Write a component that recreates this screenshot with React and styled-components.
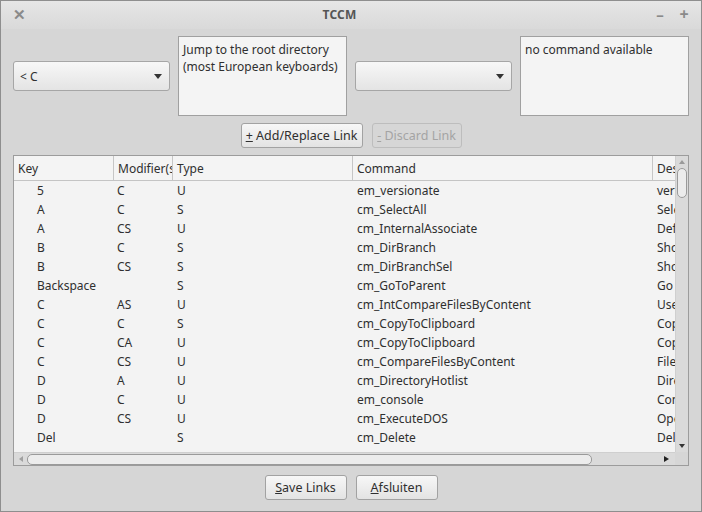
import React from "react";
import styled, { createGlobalStyle } from "styled-components";

const Global = createGlobalStyle`
  html, body { margin: 0; padding: 0; background: #d6d6d6; }
  body { font-family: "Noto Sans", "Open Sans", sans-serif; font-size: 12px; color: #2f2f2f; }
  * { box-sizing: border-box; }
`;

const Window = styled.div`
  width: 702px;
  height: 512px;
  border: 1px solid #8e8e8e;
  background: #d6d6d6;
  display: flex;
  flex-direction: column;
  overflow: hidden;
`;

const TitleBar = styled.div`
  height: 28px;
  flex: none;
  display: flex;
  align-items: center;
  padding: 0 10px 2px 11px;
  background: linear-gradient(#e6e6e6, #d9d9d9);
`;

const Title = styled.div`
  flex: 1;
  text-align: center;
  font-weight: bold;
  font-size: 12px;
  color: #555;
  letter-spacing: 0.2px;
`;

const TitleBtn = styled.span`
  width: 14px;
  display: inline-flex;
  justify-content: center;
  color: #8a8a8a;
  font-weight: bold;
  font-size: ${(p) => p.$size || 14}px;
  margin-left: ${(p) => p.$ml || 0}px;
`;

const Content = styled.div`
  flex: 1;
  display: flex;
  flex-direction: column;
  padding: 7px 12px 11px 12px;
`;

const TopRow = styled.div`
  display: flex;
  align-items: center;
  gap: 8px;
`;

const Combo = styled.div`
  width: 157px;
  height: 30px;
  border: 1px solid #a6a6a6;
  border-radius: 3px;
  background: linear-gradient(#f7f7f7, #e4e4e4);
  display: flex;
  align-items: center;
  padding: 0 7px 0 6px;
`;

const ComboText = styled.span`
  flex: 1;
`;

const Caret = styled.span`
  width: 0;
  height: 0;
  border-left: 4px solid transparent;
  border-right: 4px solid transparent;
  border-top: 5px solid #333;
`;

const Memo = styled.div`
  width: 169px;
  height: 80px;
  border: 1px solid #a0a0a0;
  background: #f4f4f4;
  padding: 4px 4px;
  line-height: 17px;
`;

const ButtonRow = styled.div`
  display: flex;
  justify-content: center;
  gap: 9px;
  margin-top: ${(p) => p.$mt}px;
`;

const Button = styled.div`
  height: 25px;
  width: ${(p) => p.$w}px;
  border: 1px solid ${(p) => (p.$disabled ? "#bdbdbd" : "#a2a2a2")};
  border-radius: 3px;
  background: ${(p) => (p.$disabled ? "#d6d6d6" : "linear-gradient(#f7f7f7, #e3e3e3)")};
  color: ${(p) => (p.$disabled ? "#a4a4a4" : "#2f2f2f")};
  display: flex;
  align-items: center;
  justify-content: center;
  font-size: 12.5px;
`;

const U = styled.span`
  text-decoration: underline;
`;

const Grid = styled.div`
  margin-top: 7px;
  height: 311px;
  border: 1px solid #9c9c9c;
  background: #f3f3f3;
  display: flex;
  flex-direction: column;
`;

const GridMain = styled.div`
  flex: 1;
  display: flex;
  min-height: 0;
`;

const Viewport = styled.div`
  flex: 1;
  overflow: hidden;
  background: #f3f3f3;
`;

const HeaderRow = styled.div`
  display: flex;
  height: 25px;
  border-bottom: 1px solid #c4c4c4;
  background: #f4f4f4;
`;

const HeadCell = styled.div`
  flex: none;
  width: ${(p) => p.$w}px;
  padding-left: 4px;
  display: flex;
  align-items: center;
  border-right: ${(p) => (p.$last ? "none" : "1px solid #c6c6c6")};
  overflow: hidden;
  white-space: nowrap;
`;

const Row = styled.div`
  display: flex;
  height: 19px;
  align-items: center;
`;

const Cell = styled.div`
  flex: none;
  width: ${(p) => p.$w}px;
  padding-left: ${(p) => p.$pl}px;
  overflow: hidden;
  white-space: nowrap;
`;

const VScroll = styled.div`
  width: 13px;
  flex: none;
  background: #dadada;
  border-left: 1px solid #cfcfcf;
  display: flex;
  flex-direction: column;
  align-items: center;
`;

const HScroll = styled.div`
  flex: 1;
  height: 13px;
  background: #dadada;
  border-top: 1px solid #cfcfcf;
  display: flex;
  align-items: center;
  padding: 0 6px 0 5px;
`;

const HRow = styled.div`
  display: flex;
  flex: none;
`;

const Corner = styled.div`
  width: 13px;
  height: 13px;
  background: #d6d6d6;
`;

const ArrowUp = styled.span`
  width: 0; height: 0;
  border-left: 3px solid transparent;
  border-right: 3px solid transparent;
  border-bottom: 4px solid ${(p) => p.$c};
`;
const ArrowDown = styled.span`
  width: 0; height: 0;
  border-left: 3px solid transparent;
  border-right: 3px solid transparent;
  border-top: 4px solid ${(p) => p.$c};
`;
const ArrowLeft = styled.span`
  width: 0; height: 0;
  border-top: 3px solid transparent;
  border-bottom: 3px solid transparent;
  border-right: 4px solid ${(p) => p.$c};
`;
const ArrowRight = styled.span`
  width: 0; height: 0;
  border-top: 3px solid transparent;
  border-bottom: 3px solid transparent;
  border-left: 5px solid ${(p) => p.$c};
`;

const VThumb = styled.div`
  width: 10px;
  height: 30px;
  border: 1px solid #9a9a9a;
  border-radius: 5px;
  background: #ececec;
  margin-top: 4px;
`;

const HThumb = styled.div`
  width: 565px;
  height: 11px;
  border: 1px solid #9a9a9a;
  border-radius: 5px;
  background: #ececec;
  margin-left: 4px;
`;

const Spacer = styled.div`
  flex: 1;
`;

const Gap = styled.div`
  height: ${(p) => p.$h}px;
  flex: none;
`;

const cols = [
  { w: 100, pl: 23 },
  { w: 59, pl: 3 },
  { w: 180, pl: 4 },
  { w: 300, pl: 4 },
  { w: 300, pl: 4 },
];

const heads = ["Key", "Modifier(s)", "Type", "Command", "Description"];

const rows = [
  ["5", "C", "U", "em_versionate", "versionate"],
  ["A", "C", "S", "cm_SelectAll", "Select all"],
  ["A", "CS", "U", "cm_InternalAssociate", "Define associations"],
  ["B", "C", "S", "cm_DirBranch", "Show all files"],
  ["B", "CS", "S", "cm_DirBranchSel", "Show selected"],
  ["Backspace", "", "S", "cm_GoToParent", "Go to parent"],
  ["C", "AS", "U", "cm_IntCompareFilesByContent", "Use internal compare"],
  ["C", "C", "S", "cm_CopyToClipboard", "Copy to clipboard"],
  ["C", "CA", "U", "cm_CopyToClipboard", "Copy to clipboard"],
  ["C", "CS", "U", "cm_CompareFilesByContent", "File compare"],
  ["D", "A", "U", "cm_DirectoryHotlist", "Directory hotlist"],
  ["D", "C", "U", "em_console", "Console"],
  ["D", "CS", "U", "cm_ExecuteDOS", "Open command prompt"],
  ["Del", "", "S", "cm_Delete", "Delete"],
  ["Down", "", "S", "cm_Down", "Down"],
];

export default function App() {
  return (
    <>
      <Global />
      <Window>
        <TitleBar>
          <TitleBtn $size={15}>✕</TitleBtn>
          <Title>TCCM</Title>
          <TitleBtn $size={15}>–</TitleBtn>
          <TitleBtn $size={16} $ml={10}>+</TitleBtn>
        </TitleBar>
        <Content>
          <TopRow>
            <Combo>
              <ComboText>&lt; C</ComboText>
              <Caret />
            </Combo>
            <Memo>
              Jump to the root directory
              <br />
              (most European keyboards)
            </Memo>
            <Combo>
              <ComboText />
              <Caret />
            </Combo>
            <Memo>no command available</Memo>
          </TopRow>
          <ButtonRow $mt={7}>
            <Button $w={122}>
              <U>+</U>&nbsp;Add/Replace Link
            </Button>
            <Button $w={90} $disabled>
              <U>-</U>&nbsp;Discard Link
            </Button>
          </ButtonRow>
          <Grid>
            <GridMain>
              <Viewport>
                <HeaderRow>
                  {heads.map((h, i) => (
                    <HeadCell key={h} $w={cols[i].w} $last={i === 4}>
                      {h}
                    </HeadCell>
                  ))}
                </HeaderRow>
                {rows.map((r, ri) => (
                  <Row key={ri}>
                    {r.map((c, ci) => (
                      <Cell key={ci} $w={cols[ci].w} $pl={cols[ci].pl}>
                        {c}
                      </Cell>
                    ))}
                  </Row>
                ))}
              </Viewport>
              <VScroll>
                <Gap $h={4} />
                <ArrowUp $c="#9a9a9a" />
                <VThumb />
                <Spacer />
                <ArrowDown $c="#333" />
                <Gap $h={4} />
              </VScroll>
            </GridMain>
            <HRow>
              <HScroll>
                <ArrowLeft $c="#a0a0a0" />
                <HThumb />
                <Spacer />
                <ArrowRight $c="#222" />
              </HScroll>
              <Corner />
            </HRow>
          </Grid>
          <ButtonRow $mt={9}>
            <Button $w={82}>
              <U>S</U>ave Links
            </Button>
            <Button $w={82}>
              <U>A</U>fsluiten
            </Button>
          </ButtonRow>
        </Content>
      </Window>
    </>
  );
}
